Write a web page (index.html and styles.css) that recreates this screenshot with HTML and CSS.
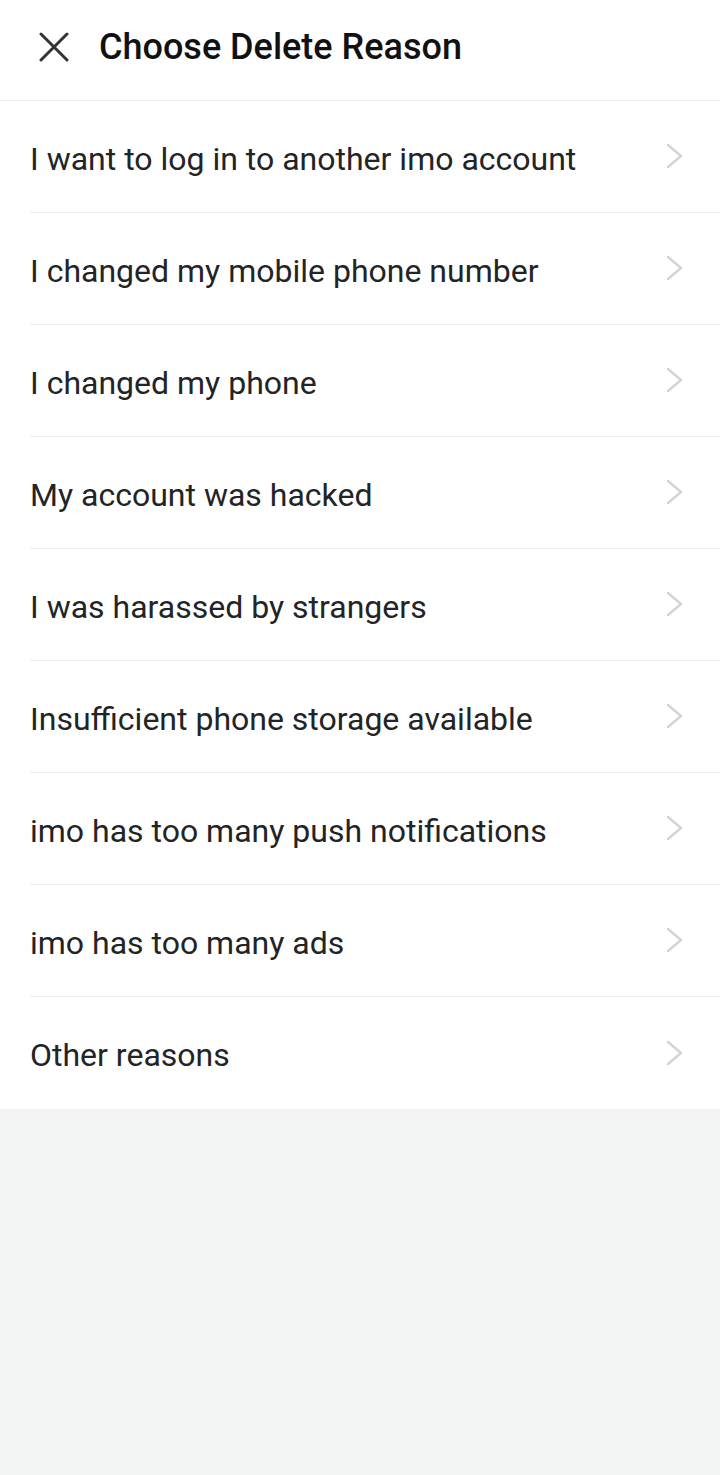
FILE: index.html
```html
<!DOCTYPE html>
<html lang="en">
  <head>
    <meta charset="UTF-8" />
    <meta name="viewport" content="width=device-width, initial-scale=1.0" />
    <title>Choose Delete Reason</title>
    <link rel="stylesheet" href="styles.css">
  </head>
  <body>
    <header class="top-bar">
      <button class="close-btn" aria-label="Close">
        <svg width="30" height="30" viewBox="0 0 30 30">
          <path d="M2 2 L28 28 M28 2 L2 28" stroke="#333" stroke-width="3" stroke-linecap="round" fill="none" />
        </svg>
      </button>
      <h1 class="title">Choose Delete Reason</h1>
    </header>

    <ul class="reason-list">
      <li class="reason"><span>I want to log in to another imo account</span><svg class="chevron" viewBox="0 0 20 26"><path d="M3 2 L16 13 L3 24" /></svg></li>
      <li class="reason"><span>I changed my mobile phone number</span><svg class="chevron" viewBox="0 0 20 26"><path d="M3 2 L16 13 L3 24" /></svg></li>
      <li class="reason"><span>I changed my phone</span><svg class="chevron" viewBox="0 0 20 26"><path d="M3 2 L16 13 L3 24" /></svg></li>
      <li class="reason"><span>My account was hacked</span><svg class="chevron" viewBox="0 0 20 26"><path d="M3 2 L16 13 L3 24" /></svg></li>
      <li class="reason"><span>I was harassed by strangers</span><svg class="chevron" viewBox="0 0 20 26"><path d="M3 2 L16 13 L3 24" /></svg></li>
      <li class="reason"><span>Insufficient phone storage available</span><svg class="chevron" viewBox="0 0 20 26"><path d="M3 2 L16 13 L3 24" /></svg></li>
      <li class="reason"><span>imo has too many push notifications</span><svg class="chevron" viewBox="0 0 20 26"><path d="M3 2 L16 13 L3 24" /></svg></li>
      <li class="reason"><span>imo has too many ads</span><svg class="chevron" viewBox="0 0 20 26"><path d="M3 2 L16 13 L3 24" /></svg></li>
      <li class="reason"><span>Other reasons</span><svg class="chevron" viewBox="0 0 20 26"><path d="M3 2 L16 13 L3 24" /></svg></li>
    </ul>
  </body>
</html>
```

FILE: styles.css
```css
* {
  margin: 0;
  padding: 0;
  box-sizing: border-box;
}

:root {
  --text-color: #222426;
  --divider: #ececec;
  --page-bg: #f3f4f4;
}

body {
  font-family: Roboto, "Noto Sans", sans-serif;
  color: var(--text-color);
  background: var(--page-bg);
  min-height: 100vh;
}

.top-bar {
  height: 101px;
  display: flex;
  align-items: center;
  background: #fff;
  border-bottom: 1px solid var(--divider);
  padding-left: 39px;
  padding-bottom: 6px;
}

.close-btn {
  background: none;
  border: none;
  width: 30px;
  height: 30px;
  display: flex;
}

.title {
  margin-left: 30px;
  font-size: 36px;
  font-weight: 500;
  color: #111;
}

.reason-list {
  list-style: none;
  background: #fff;
}

.reason {
  height: 112px;
  margin-left: 30px;
  padding-top: 4px;
  display: flex;
  align-items: center;
  justify-content: space-between;
  border-bottom: 1px solid var(--divider);
  font-size: 32px;
}

.reason:last-child {
  border-bottom: none;
}

.chevron {
  width: 20px;
  height: 26px;
  margin-right: 35px;
  margin-top: -5px;
  fill: none;
  stroke: #d4d4d4;
  stroke-width: 2.5;
  stroke-linecap: round;
  stroke-linejoin: round;
}
```
